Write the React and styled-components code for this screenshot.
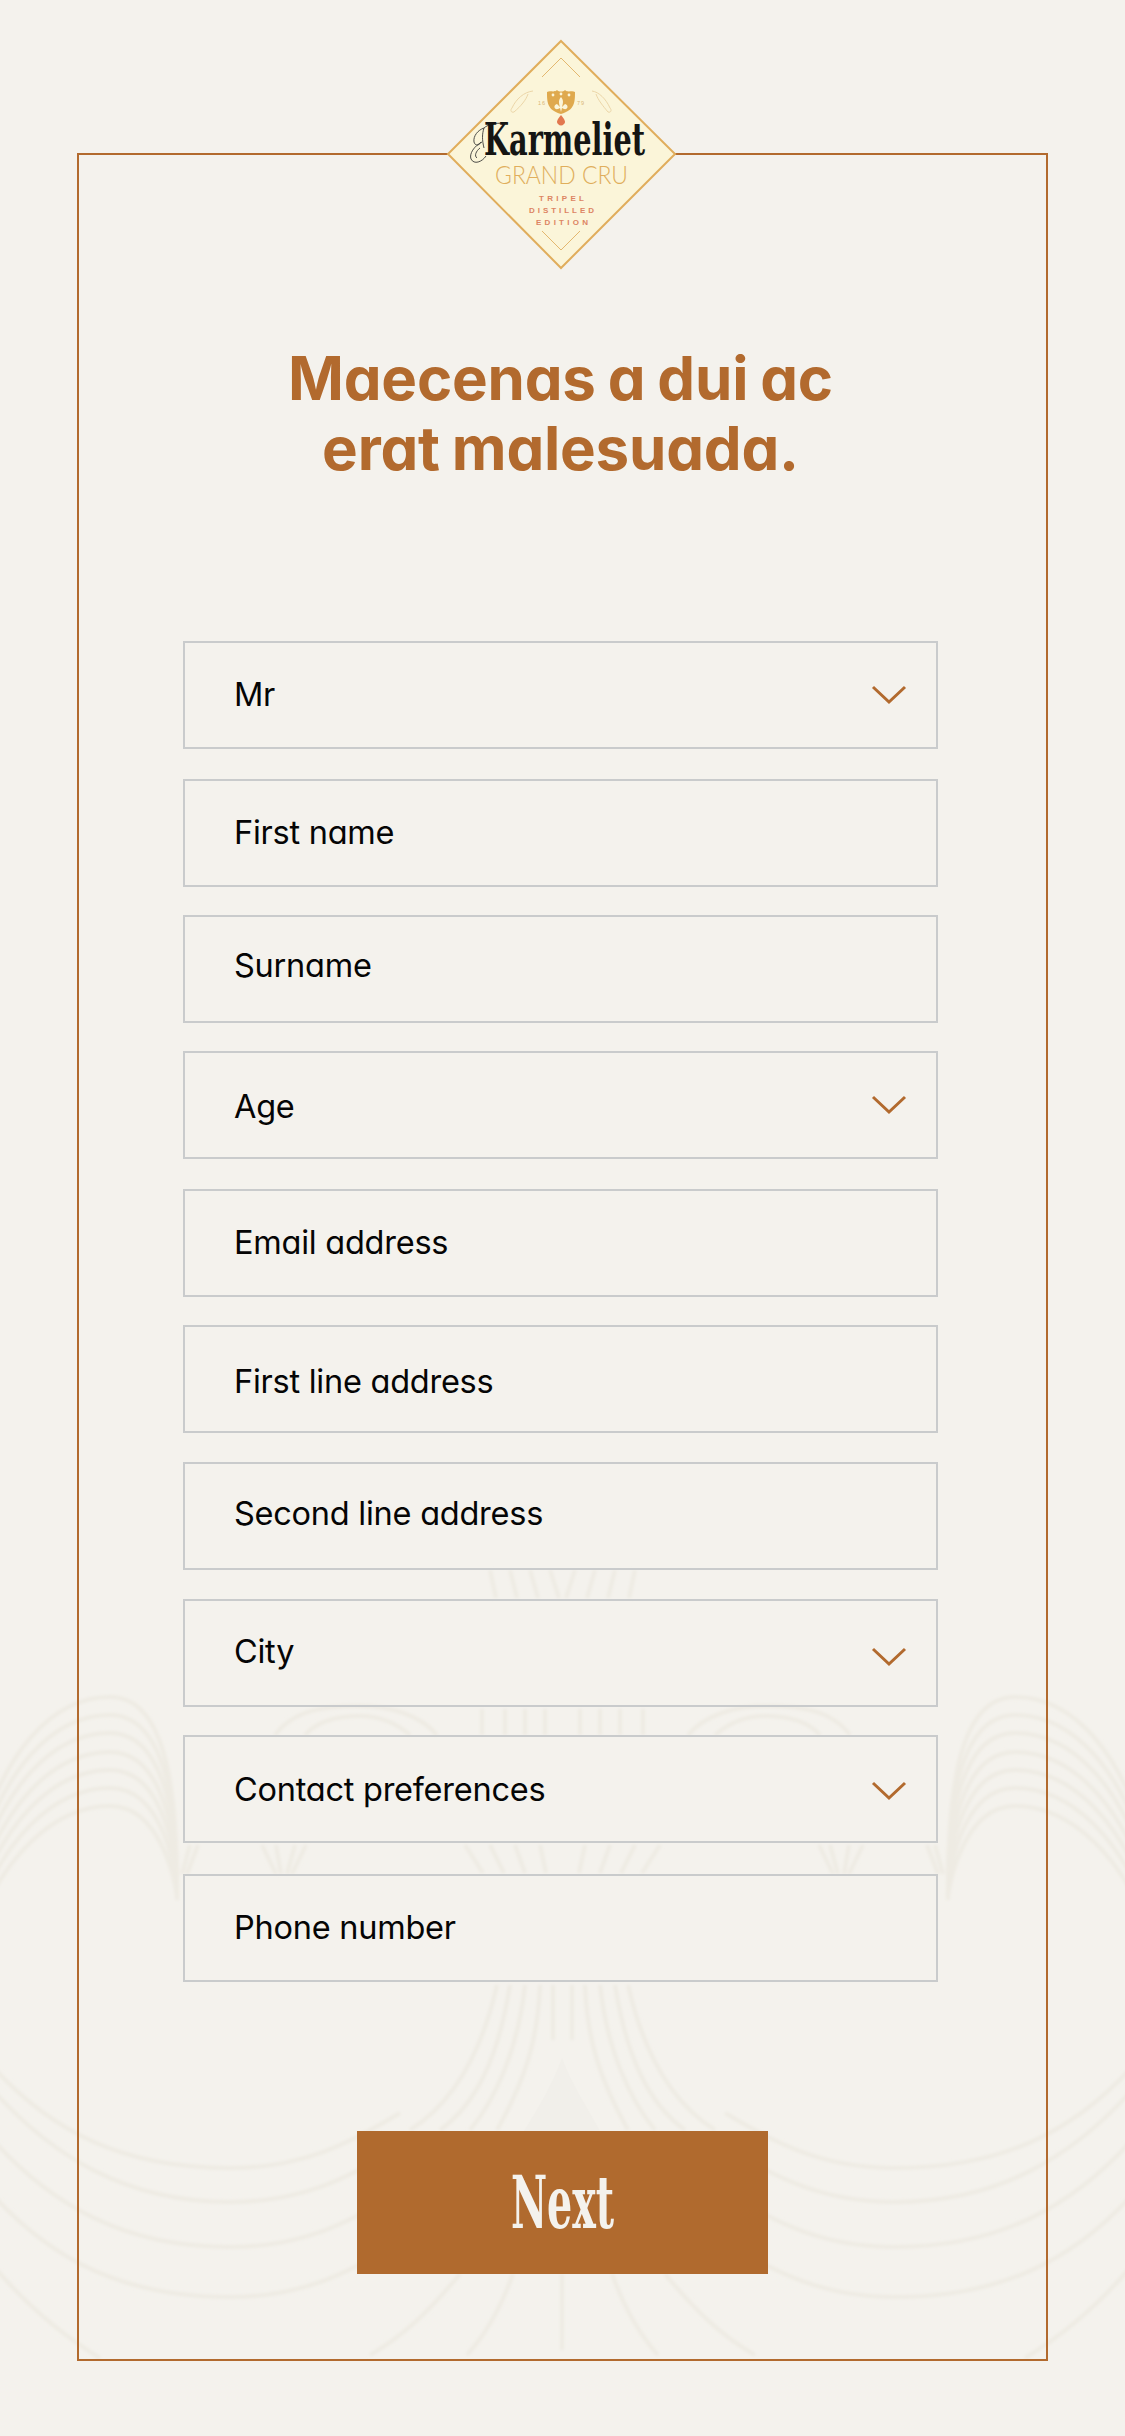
import React from "react";
import styled, { createGlobalStyle } from "styled-components";

const GlobalStyle = createGlobalStyle`
  html, body { margin: 0; padding: 0; background: #f4f2ed; }
`;

const Page = styled.div`
  position: relative;
  width: 1125px;
  height: 2436px;
  padding: 153px 0 0 77px;
  box-sizing: border-box;
  overflow: hidden;
  background: #f4f2ed;
  font-family: Inter, "Liberation Sans", sans-serif;
  font-feature-settings: "cv11" 1;
`;

const Backdrop = styled.svg`
  position: absolute;
  left: 0;
  top: 0;
  pointer-events: none;
`;

const Frame = styled.main`
  position: relative;
  box-sizing: border-box;
  width: 971px;
  height: 2208px;
  border: 2px solid #b26a2e;
  padding: 188px 0 0 104px;
`;

const Logo = styled.svg`
  position: absolute;
  left: 341px;
  top: -135px;
`;

const Heading = styled.h1`
  width: 755px;
  margin: 0 0 158px;
  text-align: center;
  font-size: 60px;
  line-height: 70px;
  font-weight: 700;
  letter-spacing: -0.2px;
  word-spacing: -2px;
  color: #b26a2e;
`;

const Form = styled.form`
  display: flex;
  flex-direction: column;
  width: 755px;
`;

const Field = styled.div`
  box-sizing: border-box;
  height: 108px;
  margin-top: ${(p) => p.$gap}px;
  padding: 0 29px 0 49px;
  border: 2px solid #c9cbcc;
  display: flex;
  align-items: center;
  justify-content: space-between;
`;

const Label = styled.span`
  font-size: 32.5px;
  font-weight: 400;
  letter-spacing: -0.25px;
  line-height: 40px;
  color: #050505;
  transform: translateY(${(p) => p.$nudge}px);
`;

const Chevron = styled.svg`
  width: 36px;
  height: 20px;
  transform: translateY(${(p) => p.$nudge}px);
`;

const NextButton = styled.button`
  display: block;
  width: 411px;
  height: 143px;
  margin: 149px 0 0 174px;
  border: 0;
  padding: 0;
  background: #b06a2e;
  color: #f4f2ed;
  cursor: pointer;
`;

const NextLabel = styled.span`
  display: inline-block;
  font-family: "DejaVu Serif Condensed", "DejaVu Serif", serif;
  font-weight: 700;
  font-size: 72px;
  line-height: 143px;
  transform: scaleX(0.61);
`;

const fields = [
  { label: "Mr", select: true, gap: 0, nudge: 0 },
  { label: "First name", gap: 30, nudge: 0 },
  { label: "Surname", gap: 28, nudge: -3 },
  { label: "Age", select: true, gap: 28, nudge: 2 },
  { label: "Email address", gap: 30, nudge: 0 },
  { label: "First line address", gap: 28, nudge: 3 },
  { label: "Second line address", gap: 29, nudge: -2 },
  { label: "City", select: true, gap: 29, nudge: -1, chev: 4 },
  { label: "Contact preferences", select: true, gap: 28, nudge: 1, chev: 2 },
  { label: "Phone number", gap: 31, nudge: 0 },
];

const swags = [
  [2077, 2168],
  [2100, 2202],
  [2150, 2247],
  [2205, 2297],
];

const archTops = [1697, 1715, 1733, 1752, 1770, 1788, 1806];

const flareTop = [
  "M497 1985 C480 2060 450 2105 410 2130",
  "M510 1985 C498 2060 475 2105 440 2130",
  "M525 1985 C518 2050 495 2100 470 2130",
  "M540 1985 C538 2040 525 2080 497 2130",
  "M553 1985 L553 2040",
];

const flareBottom = [
  "M460 2274 C430 2310 405 2335 370 2355",
  "M513 2274 C500 2310 485 2335 467 2355",
];

function Pattern() {
  const half = (
    <>
      {archTops.map((t, i) => (
        <path
          key={t}
          d={`M-30 ${t + 175 - i * 6} C0 ${t + 50} 55 ${t} 110 ${t} C165 ${t} 178 ${t + 90} 177 1900`}
        />
      ))}
      <path d="M275 1735 C295 1708 330 1706 360 1706 C390 1706 420 1715 437 1735" />
      <path d="M305 1735 C320 1718 345 1716 360 1716 C380 1716 395 1722 410 1735" />
      {[[262, 276], [276, 281], [295, 287], [306, 292], [198, 187], [190, 182]].map(([a, b]) => (
        <path key={a} d={`M${a} 1845 L${b} 1874`} />
      ))}
      {swags.map(([l, b]) => (
        <path key={l} d={`M-20 ${l - 25} C50 ${l + 60} 130 ${b} 230 ${b} C300 ${b} 345 ${b - 22} 400 ${b - 55}`} />
      ))}
      <path d="M-10 2262 C30 2310 70 2340 100 2358" />
      {flareTop.map((d) => <path key={d} d={d} />)}
      {flareBottom.map((d) => <path key={d} d={d} />)}
      {[490, 510, 530, 550].map((x, i) => (
        <path key={x} d={`M${x} 1570 L${x + 6 + i} 1598`} />
      ))}
      {[482, 505, 525, 545].map((x) => (
        <path key={x} d={`M${x} 1709 L${x} 1735`} />
      ))}
      {[465, 490, 515, 540].map((x, i) => (
        <path key={x} d={`M${x} 1845 L${x + 18 - i * 4} 1873`} />
      ))}
    </>
  );
  return (
    <Backdrop width="1125" height="2436" viewBox="0 0 1125 2436" aria-hidden="true">
      <defs>
        <filter id="soft" x="-5%" y="-5%" width="110%" height="110%">
          <feGaussianBlur stdDeviation="1.5" />
        </filter>
      </defs>
      <g fill="none" stroke="#eeebe3" strokeWidth="4" filter="url(#soft)">
        {half}
        <g transform="translate(1125 0) scale(-1 1)">{half}</g>
        <path d="M562 2274 L562 2350" />
      </g>
      <path d="M562 2058 C552 2085 540 2105 524 2131 L600 2131 C586 2105 572 2085 562 2058 Z" fill="#f1efea" />
    </Backdrop>
  );
}

function BrandMark() {
  return (
    <Logo width="290" height="260" viewBox="0 0 290 260" role="img" aria-label="Karmeliet Grand Cru">
      <path d="M141 21 L255 134 L141 248 L28 134 Z" fill="#fbf5d9" stroke="#e0ad5c" strokeWidth="2" />
      <path d="M122 57 L141 38 L160 57 M122 211 L141 230 L160 211" fill="none" stroke="#e3b76f" strokeWidth="1" />
      <path
        d="M127 72 C130 70 134 73 137 70 C139 72 143 72 145 70 C148 73 152 70 155 72 C155 82 155 90 141 94 C127 90 127 82 127 72 Z"
        fill="#dfa94e"
      />
      <path
        d="M141 77 C144 80 143 84 142 87 L145 84 C149 85 148 90 144 89 L142 88 L141 92 L140 88 L138 89 C134 90 133 85 137 84 L140 87 C139 84 138 80 141 77 Z"
        fill="#fbf5d9"
      />
      <circle cx="133" cy="75" r="1.4" fill="#fbf5d9" />
      <circle cx="141" cy="74" r="1.4" fill="#fbf5d9" />
      <circle cx="149" cy="75" r="1.4" fill="#fbf5d9" />
      <path d="M141 95 C145 100 146 102 144 104 C142 106 140 106 138 104 C136 102 137 100 141 95 Z" fill="#e2774f" />
      <path
        d="M113 71 C104 72 96 79 92 88 M108 74 C106 80 101 86 94 92 M92 88 C90 90 91 93 94 92 M172 71 C179 72 186 79 190 88 M176 74 C178 80 183 86 188 92 M190 88 C192 90 191 93 188 92"
        fill="none"
        stroke="#ecd6a8"
        strokeWidth="1"
      />
      <text x="122" y="85" textAnchor="middle" fontFamily="Liberation Sans" fontSize="5.5" letterSpacing="1" fill="#d9b676">16</text>
      <text x="161" y="85" textAnchor="middle" fontFamily="Liberation Sans" fontSize="5.5" letterSpacing="1" fill="#d9b676">79</text>
      <path
        d="M88 104 C78 102 68 104 64 108 C58 110 53 116 54 122 C55 126 59 126 61 122 M62 122 C54 126 49 134 51 139 C54 145 62 142 66 136 M60 128 C56 131 54 136 57 138 M64 108 C62 114 62 120 64 128"
        fill="none"
        stroke="#3a3a38"
        strokeWidth="0.9"
      />
      <text x="64" y="135" fontFamily="DejaVu Serif Condensed, DejaVu Serif, serif" fontWeight="700" fontSize="45" textLength="161" lengthAdjust="spacingAndGlyphs" fill="#151513">Karmeliet</text>
      <text x="75" y="164" fontFamily="Lato, Liberation Sans, sans-serif" fontWeight="300" fontSize="25" textLength="133" lengthAdjust="spacingAndGlyphs" fill="#e0ae5c">GRAND CRU</text>
      <text x="119" y="181" fontFamily="Liberation Sans, sans-serif" fontWeight="700" fontSize="8" textLength="45" fill="#dd8463">TRIPEL</text>
      <text x="109" y="193" fontFamily="Liberation Sans, sans-serif" fontWeight="700" fontSize="8" textLength="65" fill="#dd8463">DISTILLED</text>
      <text x="116" y="205" fontFamily="Liberation Sans, sans-serif" fontWeight="700" fontSize="8" textLength="52" fill="#dd8463">EDITION</text>
    </Logo>
  );
}

export default function App() {
  return (
    <Page>
      <GlobalStyle />
      <Pattern />
      <Frame>
        <BrandMark />
        <Heading>
          Maecenas a dui ac
          <br />
          erat malesuada.
        </Heading>
        <Form>
          {fields.map((f) => (
            <Field key={f.label} $gap={f.gap}>
              <Label $nudge={f.nudge}>{f.label}</Label>
              {f.select && (
                <Chevron $nudge={f.chev || 0} viewBox="0 0 36 20" aria-hidden="true">
                  <path d="M2 2 L18 17 L34 2" fill="none" stroke="#b26a2e" strokeWidth="3" />
                </Chevron>
              )}
            </Field>
          ))}
        </Form>
        <NextButton type="button">
          <NextLabel>Next</NextLabel>
        </NextButton>
      </Frame>
    </Page>
  );
}
